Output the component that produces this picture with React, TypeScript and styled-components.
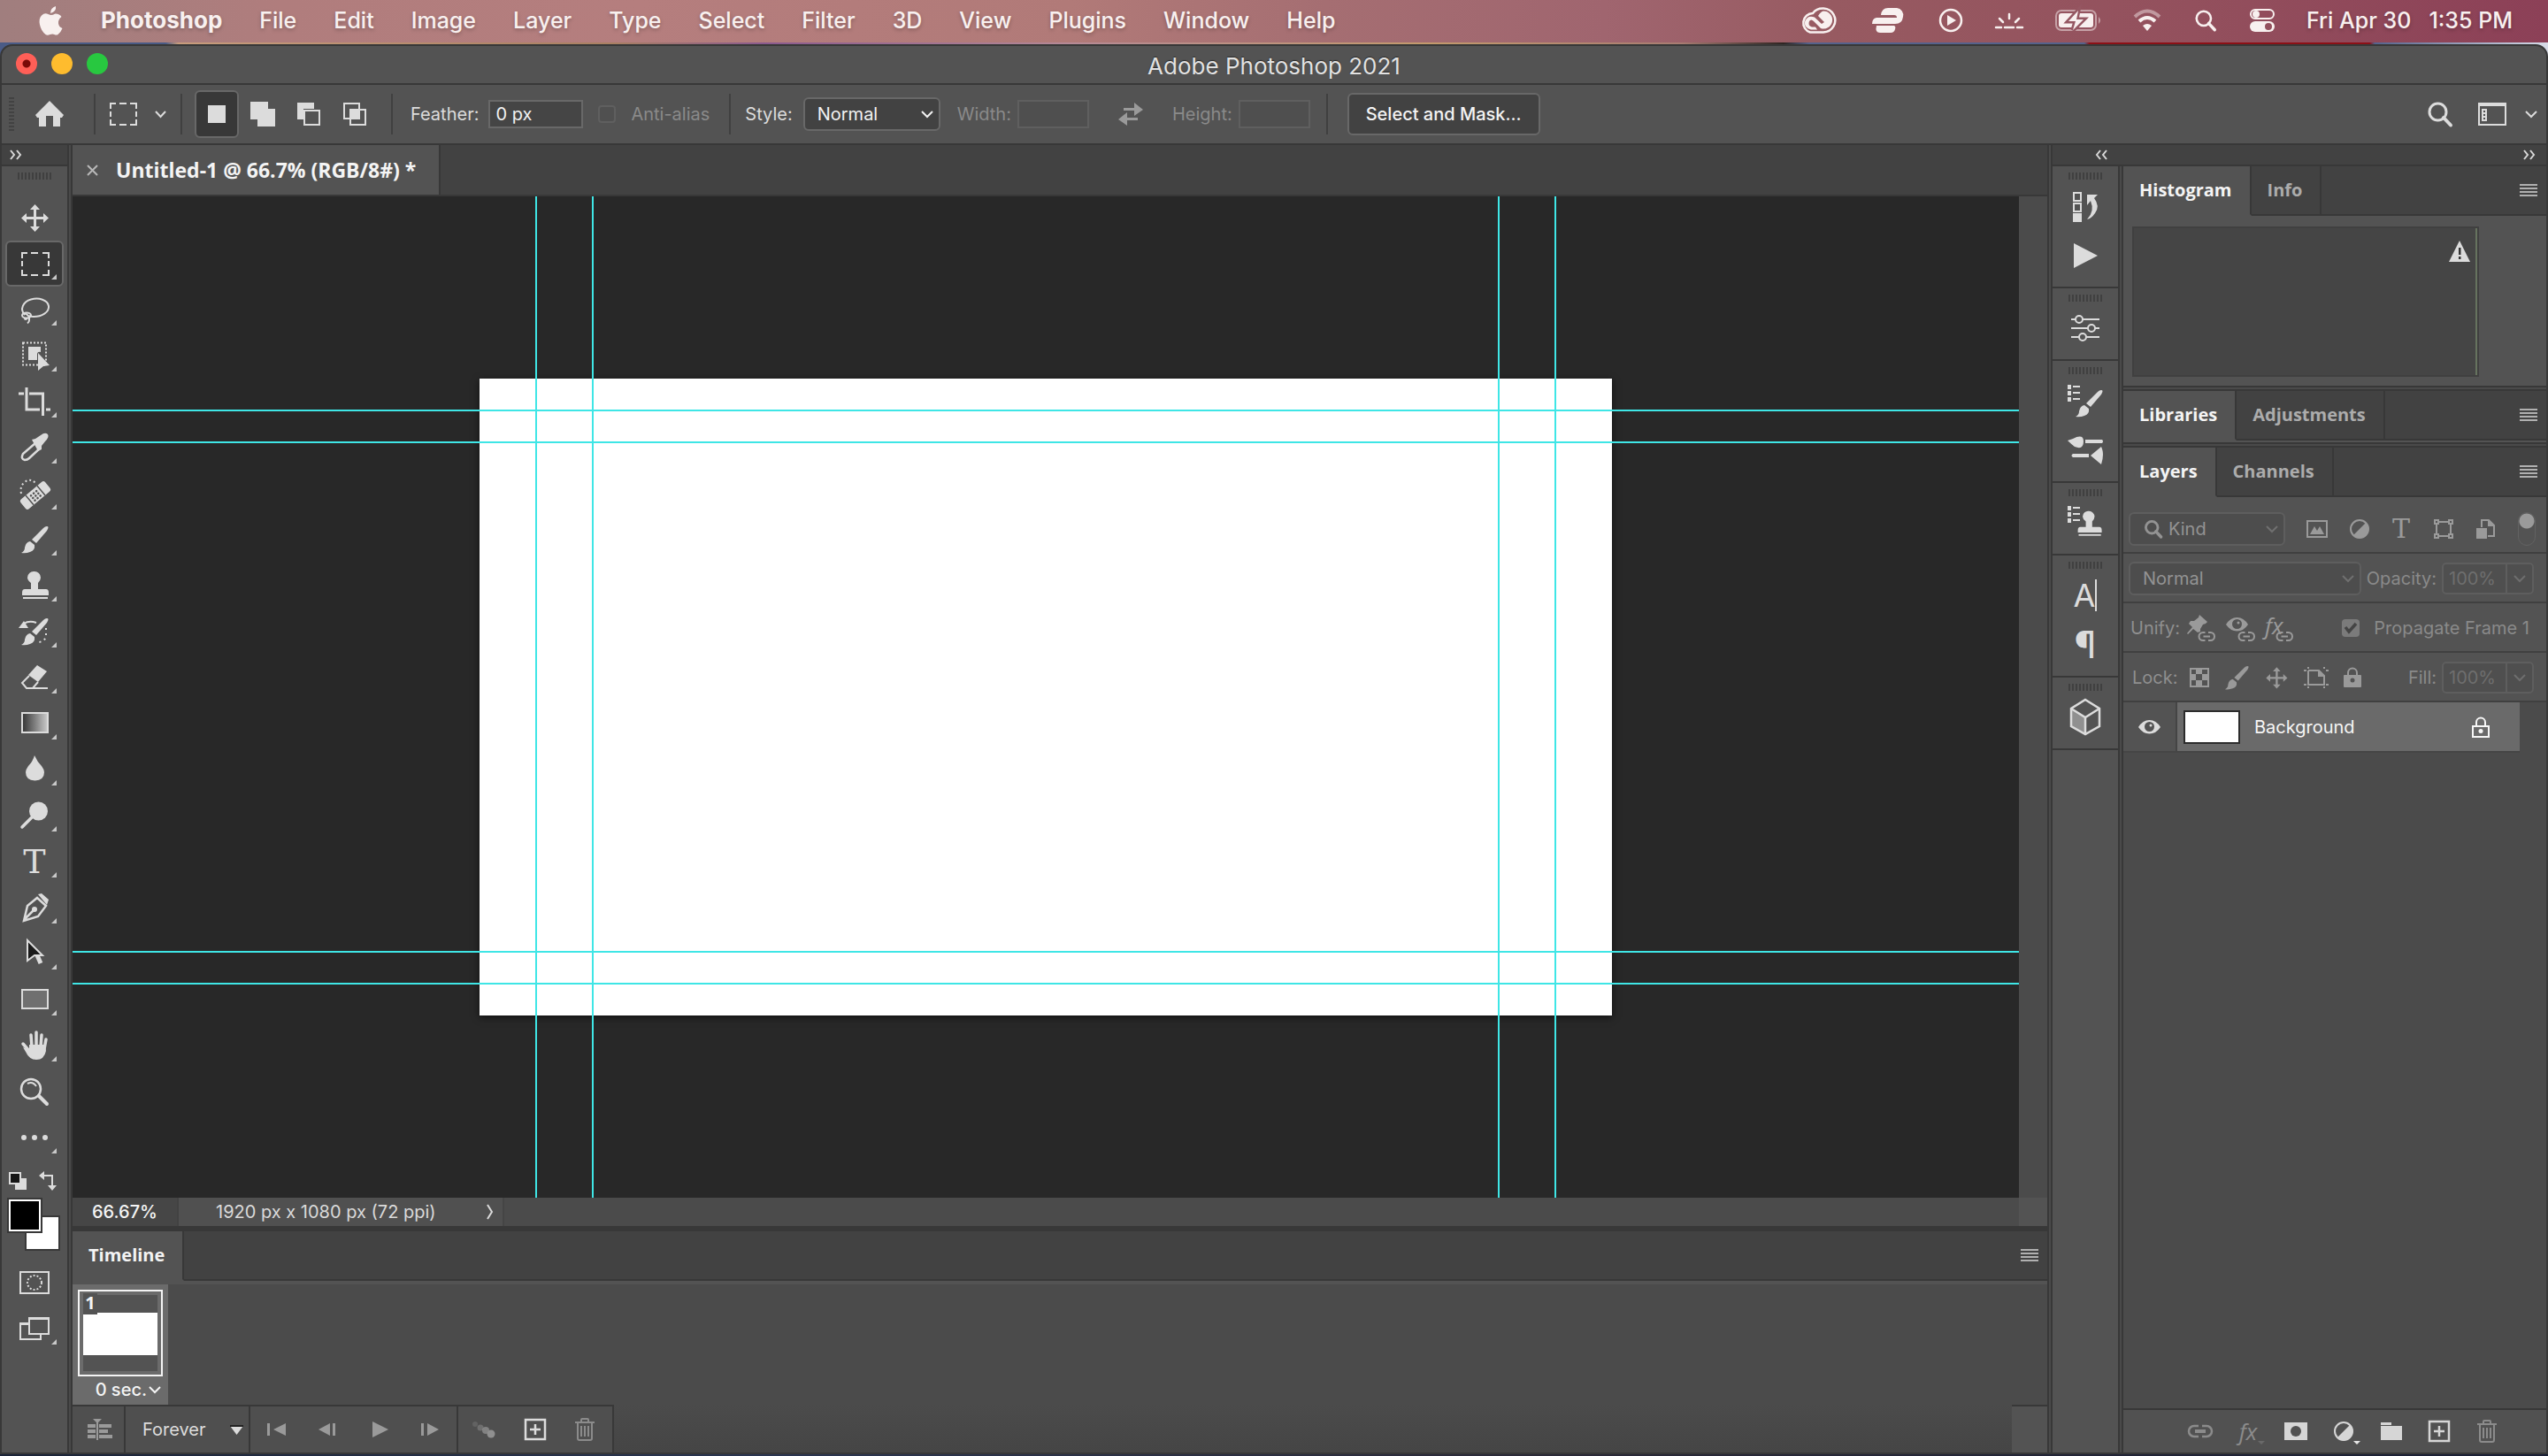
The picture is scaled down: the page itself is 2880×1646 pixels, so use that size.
import React from 'react';
import styled, { createGlobalStyle } from 'styled-components';

const c = {
  line: '#383838',
  panel: '#535353',
  bar: '#424242',
  well: '#4b4b4b',
  canvas: '#282828',
  icon: '#dcdcdc',
  dim: '#9a9a9a',
  guide: '#3fe6e6',
};
const uiFont = "Inter, 'Liberation Sans', sans-serif";
const tabFont = "'Open Sans', 'Noto Sans', sans-serif";

const Global = createGlobalStyle`
  *, *::before, *::after { box-sizing: border-box; }
  body { margin: 0; }
  button, input, select { font: inherit; color: inherit; margin: 0; padding: 0; border: 0; background: none; border-radius: 0; }
  button { display: flex; align-items: center; justify-content: center; }
  select { appearance: none; opacity: 1; }
  svg { display: block; flex: none; overflow: visible; }
`;

/* ---------- shell ---------- */

const Desktop = styled.div`
  display: flex;
  flex-direction: column;
  height: 100vh;
  padding-bottom: 2px;
  overflow: hidden;
  background: linear-gradient(90deg, #1b2438, #2a3550 30%, #2b2a38 60%, #1a2036);
  font: 400 20px/24px ${uiFont};
  color: #dcdcdc;
  white-space: nowrap;
`;

const MenuBar = styled.header`
  display: flex;
  align-items: center;
  justify-content: space-between;
  flex: none;
  height: 48px;
  padding: 0 40px 2px 44px;
  background: linear-gradient(90deg, #a07e7e 0%, #b07d7d 11%, #b57e7e 25%, #b17a78 42%, #a56e72 52%, #a0656f 63%, #975a61 72%, #93505d 86%, #8c4057 100%);
  color: #f8f0ef;
  font-size: 25px;
  line-height: 30px;
  font-weight: 500;
  text-shadow: 0 2px 4px rgba(0, 0, 0, 0.25);
`;

const Menus = styled.nav`
  display: flex;
  align-items: center;
  gap: 42px;
`;

const MenuItem = styled.button<{ $app?: boolean }>`
  font-weight: ${(p) => (p.$app ? 700 : 500)};
  font-size: ${(p) => (p.$app ? 26 : 25)}px;
  text-shadow: inherit;
`;

const StatusItems = styled.div`
  display: flex;
  align-items: center;
  gap: 36px;
`;

const StatusIcon = styled.button<{ $w: number }>`
  width: ${(p) => p.$w}px;
`;

const Clock = styled.time`
  display: flex;
  gap: 20px;
`;

const WindowFrame = styled.main`
  display: flex;
  flex-direction: column;
  flex: 1;
  min-height: 0;
  border: 2px solid ${c.line};
  border-radius: 14px 14px 0 0;
  background: ${c.panel};
  overflow: hidden;
`;

const Backdrop = styled.div`
  display: flex;
  flex: 1;
  min-height: 0;
  padding-top: 2px;
  background: linear-gradient(90deg, #4a5b86 0%, #4a5b86 6.5%, #c79c7c 7%, #a98062 24%, #8a5a8e 30%, #b58a96 42%, #c29a6c 56%, #a77c72 66%, #2e2522 70%, #55628c 71%, #55628c 81.8%, #8c1016 82%, #8c1016 93%, #55628c 93.2%, #d8dce8 100%) top / 100% 20px no-repeat;
`;

const TitleBar = styled.div`
  display: grid;
  grid-template-columns: 1fr auto 1fr;
  align-items: center;
  flex: none;
  height: 44px;
  padding: 0 16px;
  border-bottom: 2px solid ${c.line};
`;

const Lights = styled.div`
  display: flex;
  gap: 16px;
  padding-bottom: 2px;
`;

const Light = styled.button<{ $color: string; $dot?: boolean }>`
  width: 24px;
  height: 24px;
  border-radius: 50%;
  background: ${(p) => (p.$dot ? `radial-gradient(circle, #7a0a08 0 4px, ${p.$color} 5px)` : p.$color)};
`;

const Title = styled.h1`
  margin: 0;
  font-size: 26px;
  line-height: 30px;
  font-weight: 400;
  padding-top: 3px;
  color: #e2e2e2;
  text-shadow: 0 -1px 1px rgba(0, 0, 0, 0.5);
`;

/* ---------- options bar ---------- */

const OptionsBar = styled.section`
  display: flex;
  align-items: center;
  flex: none;
  height: 68px;
  border-bottom: 2px solid ${c.line};
`;

const OptionGroup = styled.div<{ $left: number; $right: number; $gap?: number; $last?: boolean }>`
  display: flex;
  align-items: center;
  height: 46px;
  gap: ${(p) => p.$gap ?? 0}px;
  padding: 0 ${(p) => p.$right}px 0 ${(p) => p.$left}px;
  border-right: ${(p) => (p.$last ? 0 : 2)}px solid #404040;
`;

const Spacer = styled.div`
  flex: 1;
`;

const GripV = styled.div`
  width: 6px;
  height: 38px;
  background: repeating-linear-gradient(${c.bar} 0 2px, transparent 2px 4px);
`;

const ModeButton = styled.button<{ $on?: boolean }>`
  width: 50px;
  height: 54px;
  border-radius: 6px;
  border: 2px solid ${(p) => (p.$on ? '#686868' : 'transparent')};
  background: ${(p) => (p.$on ? '#383838' : 'transparent')};
`;

const Label = styled.label<{ $dim?: boolean; $gap?: number }>`
  display: flex;
  align-items: center;
  gap: ${(p) => p.$gap ?? 8}px;
  color: ${(p) => (p.$dim ? '#8a8a8a' : '#dcdcdc')};
`;

const Field = styled.input<{ $w: number; $dim?: boolean }>`
  width: ${(p) => p.$w}px;
  height: 32px;
  padding: 0 6px;
  border: 2px solid ${(p) => (p.$dim ? '#5f5f5f' : '#686868')};
  background: ${(p) => (p.$dim ? '#4f4f4f' : '#454545')};
  color: #f2f2f2;
`;

const Tick = styled.input`
  appearance: none;
  width: 20px;
  height: 20px;
  border: 2px solid #5f5f5f;
  border-radius: 4px;
  background: #505050;
  &:checked {
    border: 0;
    background: #7b7b7b;
  }
`;

const TickBox = styled.span`
  display: grid;
  > * { grid-area: 1 / 1; place-self: center; pointer-events: none; }
`;

const SelectBox = styled.span<{ $w?: number; $dim?: boolean; $pad?: number }>`
  display: grid;
  align-items: center;
  width: ${(p) => (p.$w ? p.$w + 'px' : 'auto')};
  flex: ${(p) => (p.$w ? 'none' : 1)};
  height: 38px;
  border: 2px solid ${(p) => (p.$dim ? '#5e5e5e' : '#686868')};
  border-radius: 6px;
  background: ${(p) => (p.$dim ? '#4d4d4d' : '#424242')};
  color: ${(p) => (p.$dim ? '#939393' : '#f2f2f2')};
  > * { grid-area: 1 / 1; }
  > select { width: 100%; height: 34px; padding-left: ${(p) => p.$pad ?? 14}px; }
  > svg { justify-self: end; margin-right: 6px; pointer-events: none; }
  > svg:first-of-type:not(:last-child) { justify-self: start; margin-left: 16px; }
`;

const PushButton = styled.button`
  width: 218px;
  height: 48px;
  border: 2px solid #686868;
  border-radius: 6px;
  background: #424242;
  color: #f4f4f4;
  font-weight: 500;
`;

const EndTools = styled.div`
  display: flex;
  align-items: center;
  padding-right: 10px;
  gap: 29px;
  > :last-child { margin-left: -8px; }
`;

/* ---------- workspace ---------- */

const Workspace = styled.div`
  display: flex;
  flex: 1;
  min-height: 0;
`;

const Column = styled.div<{ $w?: number; $bg?: string }>`
  display: flex;
  flex-direction: column;
  flex: ${(p) => (p.$w ? 'none' : '1')};
  width: ${(p) => (p.$w ? p.$w + 'px' : 'auto')};
  min-width: 0;
  min-height: 0;
  background: ${(p) => p.$bg ?? 'transparent'};
`;

const Row = styled.div`
  display: flex;
  flex: 1;
  min-height: 0;
`;

const SplitV = styled.div`
  flex: none;
  width: 6px;
  border: solid ${c.line};
  border-width: 0 2px;
  background: #4a4a4a;
`;

const SplitH = styled.div<{ $solid?: boolean }>`
  flex: none;
  height: 6px;
  border: solid ${c.line};
  border-width: 2px 0;
  background: ${(p) => (p.$solid ? c.line : '#4a4a4a')};
`;

const DockHeader = styled.div<{ $left: number }>`
  display: flex;
  justify-content: space-between;
  align-items: center;
  flex: none;
  height: 24px;
  padding: 0 12px 0 ${(p) => p.$left}px;
  background: ${c.bar};
  border-bottom: 2px solid ${c.line};
`;

const GripH = styled.div`
  width: 39px;
  height: 8px;
  background: repeating-linear-gradient(90deg, #404040 0 2px, transparent 2px 4px);
`;

const ToolGrip = styled.div`
  display: flex;
  justify-content: center;
  height: 32px;
  padding-top: 7px;
`;

const ToolButton = styled.button<{ $on?: boolean; $more?: boolean }>`
  position: relative;
  flex: none;
  height: 52px;
  margin: 0 4px;
  border-radius: 6px;
  border: 2px solid ${(p) => (p.$on ? '#686868' : 'transparent')};
  background: ${(p) => (p.$on ? '#383838' : 'transparent')};
  &::after {
    content: '';
    display: ${(p) => (p.$more ? 'block' : 'none')};
    position: absolute;
    right: 6px;
    bottom: 6px;
    border: solid transparent;
    border-width: 3px;
    border-right-color: #c8c8c8;
    border-bottom-color: #c8c8c8;
  }
`;

const SwatchTools = styled.div`
  display: flex;
  justify-content: space-between;
  padding: 12px 12px 8px 8px;
`;

const Swatches = styled.div`
  position: relative;
  flex: none;
  height: 70px;
`;

const Swatch = styled.button<{ $front?: boolean }>`
  position: absolute;
  left: ${(p) => (p.$front ? 6 : 26)}px;
  top: ${(p) => (p.$front ? 0 : 20)}px;
  width: 40px;
  height: 40px;
  border: 2px solid ${c.line};
  background: ${(p) => (p.$front ? '#000' : '#fff')};
  box-shadow: ${(p) => (p.$front ? 'inset 0 0 0 2px #fff' : 'none')};
`;

/* ---------- tabs ---------- */

const TabStrip = styled.div`
  display: flex;
  flex: none;
  height: 56px;
  background: linear-gradient(${c.line}, ${c.line}) bottom / 100% 2px no-repeat ${c.bar};
`;

const Tab = styled.button<{ $on?: boolean }>`
  padding: 0 20px 0 18px;
  border-right: 2px solid ${c.line};
  border-bottom: 2px solid ${(p) => (p.$on ? c.panel : c.line)};
  background: ${(p) => (p.$on ? c.panel : 'transparent')};
  color: ${(p) => (p.$on ? '#f4f4f4' : '#acacac')};
  font: 700 20px/24px ${tabFont};
`;

const PanelMenu = styled.button`
  width: 20px;
  margin: 0 10px 2px auto;
`;

const DocTabs = styled.div`
  display: flex;
  flex: none;
  height: 58px;
  background: ${c.bar};
  border-bottom: 2px solid ${c.line};
`;

const DocTab = styled.div`
  display: flex;
  align-items: center;
  gap: 20px;
  padding: 0 26px 0 16px;
  border-right: 2px solid ${c.line};
  background: ${c.panel};
  color: #f4f4f4;
  font: 700 23px/28px ${tabFont};
`;

/* ---------- canvas ---------- */

const Canvas = styled.div`
  display: flex;
  align-items: center;
  justify-content: center;
  flex: 1;
  min-width: 0;
  overflow: hidden;
  background: ${c.canvas};
`;

const Artboard = styled.div`
  position: relative;
  flex: none;
  width: 1280px;
  aspect-ratio: 16 / 9;
  background: #fff;
  box-shadow: 0 2px 8px rgba(0, 0, 0, 0.6);
`;

const Guide = styled.i<{ $axis: 'x' | 'y'; $at: number }>`
  position: absolute;
  background: ${c.guide};
  ${(p) =>
    p.$axis === 'x'
      ? `left: ${p.$at}%; top: -100vh; bottom: -100vh; width: 2px; margin-left: -1px;`
      : `top: ${p.$at}%; left: -100vw; right: -100vw; height: 2px; margin-top: -1px;`}
`;

const ScrollTrack = styled.div`
  flex: none;
  width: 32px;
  background: ${c.well};
`;

const StatusBar = styled.footer`
  display: flex;
  flex: none;
  height: 32px;
  background: ${c.well};
`;

const ZoomField = styled.input`
  width: 120px;
  padding: 0 0 0 22px;
  border-right: 2px solid ${c.bar};
  background: #464646;
  color: #f4f4f4;
  font-weight: 500;
`;

const DocInfo = styled.button`
  justify-content: space-between;
  width: 368px;
  padding: 0 10px 0 42px;
  border-right: 2px solid #454545;
  background: #505050;
  color: #dadada;
`;

const Corner = styled.div<{ $w: number; $line?: boolean }>`
  width: ${(p) => p.$w}px;
  margin-left: auto;
  background: ${c.panel};
  border-top: ${(p) => (p.$line ? 2 : 0)}px solid ${c.line};
`;

/* ---------- timeline ---------- */

const Frames = styled.div`
  display: flex;
  flex: none;
  height: 140px;
  border-top: 4px solid ${c.panel};
  background: ${c.well};
`;

const Frame = styled.div`
  display: flex;
  flex-direction: column;
  align-items: center;
  width: 108px;
  padding-top: 6px;
  background: #6b6b6b;
  color: #f4f4f4;
`;

const FrameThumb = styled.button`
  position: relative;
  width: 96px;
  height: 98px;
  border: 2px solid #f4f4f4;
  background: linear-gradient(#535353 0 20px, #fff 20px 68px, #535353 68px) 4px 4px / 84px 86px no-repeat #6b6b6b;
`;

const FrameNumber = styled.span`
  position: absolute;
  left: 4px;
  top: 2px;
  width: 16px;
  height: 24px;
  background: #535353;
  font: 700 20px/22px ${tabFont};
`;

const FrameDelay = styled.button`
  gap: 2px;
  align-self: flex-end;
  margin-right: 8px;
  height: 30px;
  font-weight: 500;
`;

const TimelineBar = styled.div`
  display: flex;
  flex: none;
  height: 54px;
  background: linear-gradient(#4b4b4b, #454545);
`;

const TimelineGroup = styled.div<{ $w: number; $gap?: number; $left: number }>`
  display: flex;
  align-items: center;
  gap: ${(p) => p.$gap ?? 0}px;
  width: ${(p) => p.$w}px;
  padding-left: ${(p) => p.$left}px;
  border: solid ${c.line};
  border-width: 2px 2px 0 0;
  background: #4f4f4f;
  color: #dcdcdc;
`;

const DeleteFrame = styled.button`
  color: #8b8b8b;
`;

const Loop = styled.span`
  display: grid;
  align-items: center;
  width: 114px;
  > * { grid-area: 1 / 1; }
  > select { width: 100%; height: 40px; }
  > svg { justify-self: end; pointer-events: none; }
`;

/* ---------- right side ---------- */

const DockGroup = styled.div`
  flex: none;
  padding: 7px 0 7px;
  border-bottom: 2px solid ${c.line};
`;

const DockGrip = styled.div`
  display: flex;
  justify-content: center;
  height: 10px;
`;

const DockButton = styled.button`
  width: 100%;
  height: 56px;
`;

const Glyph = styled.span<{ $size: number; $serif?: boolean; $italic?: boolean; $bar?: boolean }>`
  min-width: 22px;
  text-align: center;
  font-family: ${(p) => (p.$serif ? "'DejaVu Serif', serif" : p.$italic ? "'Open Sans', sans-serif" : uiFont)};
  font-size: ${(p) => p.$size}px;
  font-style: ${(p) => (p.$italic ? 'italic' : 'normal')};
  font-weight: 400;
  line-height: 36px;
  border-right: ${(p) => (p.$bar ? 2 : 0)}px solid ${c.icon};
`;

const HistogramBody = styled.div`
  flex: none;
  height: 192px;
  padding: 12px 76px 10px 10px;
`;

const HistogramBox = styled.div`
  display: flex;
  justify-content: flex-end;
  height: 100%;
  padding: 14px 8px 0 0;
  border: 2px solid #404040;
  background: #454545;
  box-shadow: inset -2px 0 #66735f;
`;

const PropRow = styled.div<{ $left?: number; $right?: number; $gap?: number }>`
  display: flex;
  align-items: center;
  flex: none;
  height: 56px;
  gap: ${(p) => p.$gap ?? 0}px;
  padding: 2px ${(p) => p.$right ?? 14}px 0 ${(p) => p.$left ?? 6}px;
  border-bottom: 2px solid #404040;
  color: #8f8f8f;
`;

const FilterRow = styled(PropRow)`
  height: 64px;
  padding-top: 10px;
`;

const IconStrip = styled.div<{ $gap: number; $left: number }>`
  display: flex;
  align-items: center;
  gap: ${(p) => p.$gap}px;
  margin-left: ${(p) => p.$left}px;
  color: ${c.dim};
`;

const Toggle = styled.input`
  appearance: none;
  width: 20px;
  height: 38px;
  margin-left: auto;
  border: 1px solid #626262;
  border-radius: 10px;
  background: radial-gradient(circle at 50% 9px, ${c.dim} 8px, transparent 9px);
`;

const Percent = styled.span`
  display: flex;
  align-items: center;
  width: 104px;
  height: 36px;
  border: 2px solid #5e5e5e;
  border-radius: 5px;
  background: #4f4f4f;
  color: #6e6e6e;
  > input { width: 70px; height: 32px; padding-left: 6px; }
  > button { flex: 1; height: 32px; border-left: 2px solid #5e5e5e; }
`;

const LayerRow = styled.div`
  display: flex;
  flex: none;
  height: 57px;
  margin-right: 30px;
  border-bottom: 2px solid #454545;
  background: ${c.panel};
`;

const Visibility = styled.button`
  width: 61px;
  border-right: 2px solid #454545;
`;

const LayerBody = styled.div`
  display: flex;
  align-items: center;
  flex: 1;
  gap: 16px;
  padding: 0 34px 0 7px;
  background: #6a6a6a;
  color: #f6f6f6;
  > svg { margin-left: auto; }
`;

const LayerThumb = styled.span`
  width: 64px;
  height: 38px;
  border: 2px solid #2c2c2c;
  background: #fff;
`;

const LayerFooter = styled.footer`
  display: flex;
  align-items: center;
  justify-content: flex-end;
  flex: none;
  height: 50px;
  padding-right: 40px;
  margin-top: auto;
  border-top: 2px solid ${c.line};
  background: #515151;
`;

const FootButton = styled.button<{ $dim?: boolean; $caret?: boolean }>`
  position: relative;
  width: 54px;
  height: 48px;
  color: ${(p) => (p.$dim ? '#8b8b8b' : '#d6d6d6')};
  &::after {
    content: '';
    display: ${(p) => (p.$caret ? 'block' : 'none')};
    position: absolute;
    right: 8px;
    bottom: 9px;
    border: 4px solid transparent;
    border-bottom: 0;
    border-top-color: ${(p) => (p.$dim ? '#696969' : '#e6e6e6')};
  }
`;

/* ---------- icons ---------- */

type IconProps = { w: number; h?: number; children: React.ReactNode; color?: string };
const Icon = ({ w, h = w, children, color = 'currentColor' }: IconProps) => (
  <svg width={w} height={h} viewBox={`0 0 ${w} ${h}`} fill={color} stroke="none" aria-hidden="true">
    {children}
  </svg>
);
const line = { fill: 'none', stroke: 'currentColor', strokeWidth: 2 } as const;

const Chevron = ({ w = 14, color }: { w?: number; color?: string }) => (
  <Icon w={w} h={8}>
    <path d={`M1 1L${w / 2} 7L${w - 1} 1`} {...line} stroke={color ?? 'currentColor'} />
  </Icon>
);
const Double = ({ left }: { left?: boolean }) => (
  <Icon w={14} h={10}>
    <path d={left ? 'M6 0L2 5L6 10M13 0L9 5L13 10' : 'M1 0L5 5L1 10M8 0L12 5L8 10'} {...line} stroke="#d8d8d8" />
  </Icon>
);
const Burger = () => (
  <Icon w={20} h={14} color="#b0b0b0">
    <path d="M0 0h20v2H0zM0 4h20v2H0zM0 8h20v2H0zM0 12h20v2H0z" />
  </Icon>
);
const Magnifier = ({ w = 28, sw = 3 }: { w?: number; sw?: number }) => (
  <svg width={w} height={w} viewBox="0 0 28 28" fill="none" stroke="currentColor" strokeWidth={sw} aria-hidden="true">
    <circle cx="11.500" cy="11.500" r="9.500" />
    <path d="M18 18L26 26.500" strokeWidth={sw + 1} strokeLinecap="round" />
  </svg>
);
const Brush = () => (
  <>
    <path d="M32 3q3 0 0 5L20 22l-5-4L28 5q2-2 4-2z" />
    <path d="M13 20l5 4q1 6-5 8-5 2-10 1 4-2 4-6 1-6 6-7z" />
  </>
);
const Stamp = () => (
  <>
    <path d="M18 2a7 7 0 0 1 7 7q0 3-3 6v7h9q3 0 3 4v3H4v-3q0-4 3-4h7v-7q-4-3-4-6a7 7 0 0 1 8-7z" />
    <path d="M5 31h28v2H5z" />
  </>
);
const ListMark = () => <path d="M0 0h4v5H0zM6 1h8v2H6zM0 7h4v5H0zM6 8h8v2H6zM0 14h4v5H0zM6 15h8v2H6z" />;
const MoveShape = ({ s = 36 }: { s?: number }) => (
  <svg width={s} height={s} viewBox="0 0 36 36" fill="currentColor" aria-hidden="true">
    <path d="M17 8h3v9h9v3h-9v9h-3v-9H8v-3h9z" />
    <path d="M18.500 3l5.500 6H13zM18.500 34l5.500-6H13zM3 18.500l6-5.500v11zM34 18.500l-6-5.500v11z" />
  </svg>
);
const LinkShape = () => <path d="M7.500 1H5a4.500 4.500 0 0 0 0 9h2.500M11 1h2.500a4.500 4.500 0 0 1 0 9H11M5.500 5.500H13" fill="none" stroke="currentColor" strokeWidth="2" />;
const EyeShape = ({ bg = c.panel }: { bg?: string }) => (
  <>
    <path d="M0 8q5-8 12.500-8T25 8q-5 7.500-12.500 7.500T0 8z" />
    <circle cx="12.500" cy="7.500" r="5.500" fill={bg} />
    <circle cx="14" cy="6" r="1.500" />
  </>
);
const Trash = () => (
  <Icon w={22} h={26}>
    <path d="M7 4V2q0-1 1-1h6q1 0 1 1v2M0 5h22M3 6v17q0 2 2 2h12q2 0 2-2V6M7 9v12M11 9v12M15 9v12" {...line} />
  </Icon>
);
const NewItem = () => (
  <Icon w={24} h={24}>
    <path d="M1 1h22v22H1zM12 6v12M6 12h12" {...line} strokeWidth={2.500} />
  </Icon>
);
const HalfCircle = () => (
  <Icon w={22}>
    <circle cx="11" cy="11" r="10" {...line} />
    <path d="M18.500 3.500a10 10 0 0 1-15 15z" />
  </Icon>
);
const Padlock = ({ solid }: { solid?: boolean }) => (
  <Icon w={20} h={24}>
    <path d="M5 10V6.500a5 5 0 0 1 10 0V10" {...line} />
    {solid ? <path d="M1 9h18q1 0 1 1v12q0 1-1 1H1q-1 0-1-1V10q0-1 1-1z" /> : <path d="M1 11h18v12H1z" {...line} />}
    <circle cx="10" cy={solid ? 15 : 16.500} r="2.500" fill={solid ? c.panel : 'currentColor'} />
  </Icon>
);

type Tool = { name: string; more?: boolean; on?: boolean; art: React.ReactNode };
const tools: Tool[] = [
  { name: 'Move', art: <MoveShape /> },
  {
    name: 'Rectangular Marquee', more: true, on: true,
    art: <Icon w={36}><path d="M4 12V6h6M14 6h8M27 6h7v6M34 15v6M34 25v6h-7M22 31h-8M10 31H4v-6M4 21v-6" {...line} /></Icon>,
  },
  {
    name: 'Lasso', more: true,
    art: <Icon w={36}><g {...line}><path d="M7 24C1 18 5 9 14 6.500S33 7 34 14 26 26 17 26q-3 0-5-1" /><ellipse cx="9" cy="24.500" rx="5" ry="3" /><path d="M6 22q7 2 6 8 0 2-2 3.500M10 28q-3 2-3 0" /></g></Icon>,
  },
  {
    name: 'Object Selection', more: true,
    art: <Icon w={36}><path d="M5 3.500h26v25H5z" {...line} strokeDasharray="2 2" /><path d="M11 8h14v6q-4-1-4 3v6H11z" /><path d="M22 15l13 14-7 1-6 5z" /></Icon>,
  },
  {
    name: 'Crop', more: true,
    art: <Icon w={36}><g {...line} strokeWidth={3}><path d="M0 9h6M12 9h15.500v25M9 2v25h15M31 27h5" /></g></Icon>,
  },
  {
    name: 'Eyedropper', more: true,
    art: <Icon w={36}><path d="M19 13L5 25q-3 6 2 7 3 0 5-2L25 18" {...line} strokeWidth={2.500} /><path d="M15 9l4-1 6-4q5-4 8-1 2 3-3 8l-4 5v4l-4 2z" /></Icon>,
  },
  {
    name: 'Spot Healing Brush', more: true,
    art: <Icon w={36}><path d="M3 18q-2-8 4-13t12 1" {...line} strokeDasharray="2 3" /><g transform="rotate(-40 19 20)"><rect x="1" y="13" width="36" height="14" rx="3" /><path d="M10.500 13v14M27.500 13v14" stroke={c.panel} strokeWidth="1.500" /><g fill={c.panel}><circle cx="15" cy="17" r="1.300" /><circle cx="19" cy="17" r="1.300" /><circle cx="23" cy="17" r="1.300" /><circle cx="15" cy="20.500" r="1.300" /><circle cx="19" cy="20.500" r="1.300" /><circle cx="23" cy="20.500" r="1.300" /><circle cx="15" cy="24" r="1.300" /><circle cx="19" cy="24" r="1.300" /><circle cx="23" cy="24" r="1.300" /></g></g></Icon>,
  },
  { name: 'Brush', more: true, art: <Icon w={36}><Brush /></Icon> },
  { name: 'Clone Stamp', more: true, art: <Icon w={36}><Stamp /></Icon> },
  {
    name: 'History Brush', more: true,
    art: <Icon w={36}><Brush /><path d="M0 14L6 6l5 8z" /><path d="M6 9q6-4 14-1" {...line} /><path d="M31 14v10q-2 5-8 6" {...line} strokeDasharray="2 4" /></Icon>,
  },
  {
    name: 'Eraser', more: true,
    art: <Icon w={36}><path d="M21 4l11 7-10 12-11-8z" /><path d="M12 16L4 24l5 6h7l6-7M9 30h24" {...line} /></Icon>,
  },
  {
    name: 'Gradient', more: true,
    art: <Icon w={36}><defs><linearGradient id="ramp"><stop offset="0" stopColor="#333" /><stop offset="1" stopColor="#ccc" /></linearGradient></defs><path d="M4 6h29v22H4z" fill="url(#ramp)" stroke={c.icon} strokeWidth="2" /></Icon>,
  },
  { name: 'Blur', more: true, art: <Icon w={36}><path d="M18 2q3 7 8 12 3 4 3 7 0 9-10.500 9.500Q8 30 8 21q0-3 3-7 5-5 7-12z" /></Icon> },
  { name: 'Dodge', more: true, art: <Icon w={36}><circle cx="22.500" cy="13" r="10.500" /><path d="M15 20L4 31" {...line} strokeWidth={3.500} strokeLinecap="round" /></Icon> },
  { name: 'Type', more: true, art: <Glyph $size={38} $serif>T</Glyph> },
  {
    name: 'Pen', more: true,
    art: <Icon w={36}><path d="M6 33l4-17 11-9 10 9-9 12zM6 32l11-11" {...line} strokeWidth={2.500} /><circle cx="18" cy="20" r="3" /><path d="M22 3l4-1 8 7-2 6z" /></Icon>,
  },
  {
    name: 'Path Selection', more: true,
    art: <Icon w={36}><path d="M21 20l4 9" {...line} strokeWidth={5} /><path d="M10 3l17 17h-9l-8 6z" fill="#1a1a1a" stroke={c.icon} strokeWidth="2" /></Icon>,
  },
  { name: 'Rectangle', more: true, art: <Icon w={36}><path d="M4 7h29v21H4z" fill="#707070" stroke={c.icon} strokeWidth="2" /></Icon> },
  {
    name: 'Hand', more: true,
    art: <Icon w={36}><g {...line} strokeWidth={3.500} strokeLinecap="round"><path d="M15 20L14 6M20 19V3M25 20l1-14M29 22l2-11M12 24l-7-8" /></g><path d="M12 17h18l1 7q-2 10-11 10-8 0-12-9l-3-5 7 3z" /></Icon>,
  },
  {
    name: 'Zoom',
    art: <Icon w={36}><g {...line} strokeWidth={2.500}><circle cx="14" cy="15" r="11" /><path d="M10 9q6-3 10 3" strokeWidth="2" /></g><path d="M23 23l9 9" {...line} strokeWidth={4} strokeLinecap="round" /></Icon>,
  },
  { name: 'Edit Toolbar', more: true, art: <Icon w={36}><circle cx="6" cy="18" r="3" /><circle cx="18" cy="18" r="3" /><circle cx="30" cy="18" r="3" /></Icon> },
];

const dock: { name: string; art: React.ReactNode }[][] = [
  [
    { name: 'History', art: <Icon w={30} h={36}><path d="M2 3h8v9H2zM2 15h8v9H2z" {...line} /><path d="M1 26h10v10H1z" /><path d="M17 5h12l-4 4q7 9 1 17-4 6-9 7 9-9 4-21l-4 5z" /></Icon> },
    { name: 'Actions', art: <Icon w={28}><path d="M1 0l27 14L1 28z" /></Icon> },
  ],
  [{ name: 'Properties', art: <Icon w={32} h={32}><g {...line}><path d="M0 6h5M13 6h19M0 16h19M27 16h5M0 26h9M17 26h15" /><circle cx="9" cy="6" r="4" /><circle cx="23" cy="16" r="4" /><circle cx="13" cy="26" r="4" /></g></Icon> }],
  [
    { name: 'Brush Settings', art: <Icon w={40} h={36}><ListMark /><g transform="translate(6 3)"><Brush /></g></Icon> },
    { name: 'Brushes', art: <Icon w={40} h={36}><path d="M0 7l6-2q12-6 12 3 0 10-10 6-4-3-8-7z" /><path d="M20 6h19q2 2 0 4H20zM6 22h18v4H6q-3-2 0-4z" /><path d="M26 24l12-10q4 8 0 20z" /></Icon> },
  ],
  [{ name: 'Clone Source', art: <Icon w={40} h={38}><ListMark /><g transform="translate(8 4) scale(.9)"><Stamp /></g></Icon> }],
  [
    { name: 'Character', art: <Glyph $size={36} $bar>A</Glyph> },
    { name: 'Paragraph', art: <Glyph $size={42}>¶</Glyph> },
  ],
  [{ name: '3D', art: <Icon w={34} h={42}><path d="M1 11l16 10v19L1 31z" fill="#909090" /><path d="M17 1l16 10v20l-16 9-16-9V11zM1 11l16 10 16-10M17 20v20" {...line} strokeWidth={2.500} /></Icon> }],
];

const menus = ['File', 'Edit', 'Image', 'Layer', 'Type', 'Select', 'Filter', '3D', 'View', 'Plugins', 'Window', 'Help'];

/* ---------- composed parts ---------- */

const TabBar = ({ tabs }: { tabs: string[] }) => (
  <TabStrip role="tablist">
    {tabs.map((t, i) => (
      <Tab key={t} role="tab" aria-selected={i === 0} $on={i === 0}>{t}</Tab>
    ))}
    <PanelMenu aria-label={`${tabs[0]} panel menu`}><Burger /></PanelMenu>
  </TabStrip>
);

const PercentField = ({ id }: { id: string }) => (
  <Percent>
    <input id={id} defaultValue="100%" readOnly />
    <button aria-label="Open slider"><Chevron /></button>
  </Percent>
);

const SystemBar = () => (
  <MenuBar>
    <Menus>
      <MenuItem aria-label="Apple">
        <Icon w={28} h={32}>
          <path d="M19 0q1 6-6 8 0-6 6-8zM13.500 10q2 0 5-1.500 5 0 7 3.500-4 3-3.500 7.500.5 4 4.500 5.500-2 5-5 7-2 1-4 0t-5 0q-3 1.500-5 0-5-4-6.500-11t2-10.500q3-3 6-2t4.500 1.500z" />
        </Icon>
      </MenuItem>
      <MenuItem $app>Photoshop</MenuItem>
      {menus.map((m) => <MenuItem key={m}>{m}</MenuItem>)}
    </Menus>
    <StatusItems>
      <StatusIcon $w={42} aria-label="Creative Cloud">
        <Icon w={40} h={30}>
          <path d="M10 28.500h15A14 13.500 0 1 0 13 7 11 11 0 0 0 10 28.500z" {...line} strokeWidth={2.500} />
          <path d="M25 4.500a10 10 0 1 1-3 19.500L14 16q-3-3-5 0-2 5 3 6.500h4l2 3h-7q-8-2-7-9 3-8 11-5l8 7.500 3-2-7-7q3-5 6-5.500z" />
        </Icon>
      </StatusIcon>
      <StatusIcon $w={42} aria-label="Menu extra">
        <Icon w={36} h={28}>
          <path d="M18 0h10a8 8 0 0 1 7 10q-1 8-9 8H0q0-6 5-7h23q0-3-3-3H10q1-8 8-8z" />
          <path d="M5 20h20q2 1 1 4-1 4-5 4H9q-6 0-4-8z" />
        </Icon>
      </StatusIcon>
      <StatusIcon $w={28} aria-label="Now Playing">
        <Icon w={28}><circle cx="14" cy="14" r="12" {...line} strokeWidth={2.500} /><path d="M10 8l10 6-10 6z" /></Icon>
      </StatusIcon>
      <StatusIcon $w={32} aria-label="Keyboard Brightness">
        <Icon w={32} h={18}><path d="M1 17h6M11 17h10M25 17h6M16 2v5M5 7l4 4M27 7l-4 4" {...line} strokeWidth={2.500} strokeLinecap="round" /></Icon>
      </StatusIcon>
      <StatusIcon $w={52} aria-label="Battery">
        <Icon w={52} h={24}>
          <rect x="1" y="1" width="45" height="22" rx="6" {...line} strokeOpacity=".5" />
          <path d="M49 8q4 4 0 8z" fillOpacity=".5" />
          <rect x="4" y="4" width="39" height="16" rx="3" />
          <path d="M26 1L15 13h8l-3 10L32 11h-8z" stroke="#955762" strokeWidth="5" />
          <path d="M26 1L15 13h8l-3 10L32 11h-8z" />
        </Icon>
      </StatusIcon>
      <StatusIcon $w={32} aria-label="Wi-Fi">
        <Icon w={32} h={24}>
          <path d="M2 8q14-13 28 0" {...line} strokeWidth={4} strokeOpacity=".45" />
          <path d="M7 13q9-8 18 0" {...line} strokeWidth={4} />
          <path d="M11 18q5-4 10 0l-5 6z" />
        </Icon>
      </StatusIcon>
      <StatusIcon $w={28} aria-label="Spotlight"><Magnifier w={24} /></StatusIcon>
      <StatusIcon $w={28} aria-label="Control Center">
        <Icon w={28} h={26}>
          <rect x="1" y="1" width="26" height="10" rx="5" {...line} /><circle cx="7" cy="6" r="4" />
          <rect y="14" width="28" height="12" rx="6" /><circle cx="21" cy="20" r="4" fill="#93505d" />
        </Icon>
      </StatusIcon>
      <Clock><span>Fri Apr 30</span><span>1:35 PM</span></Clock>
    </StatusItems>
  </MenuBar>
);

const Options = () => (
  <OptionsBar aria-label="Tool options">
    <OptionGroup $left={8} $right={34} $gap={24}>
      <GripV />
      <button aria-label="Home">
        <Icon w={32} h={30}><path d="M16 0l16 16-2 3h-2v10h-8V17h-8v12H4V19H2l-2-3z" /></Icon>
      </button>
    </OptionGroup>
    <OptionGroup $left={16} $right={16} $gap={20}>
      <Icon w={31} h={26}><path d="M1 7V1h6M11 1h8M23 1h7v6M30 10v6M30 19v6h-7M19 25h-8M7 25H1v-6M1 16v-6" {...line} /></Icon>
      <button aria-label="Tool presets"><Chevron w={13} /></button>
    </OptionGroup>
    <OptionGroup $left={14} $right={16} $gap={2}>
      <ModeButton $on aria-label="New selection"><Icon w={20}><path d="M0 0h20v20H0z" /></Icon></ModeButton>
      <ModeButton aria-label="Add to selection"><Icon w={28}><path d="M0 0h20v8h8v20H8V20H0z" /></Icon></ModeButton>
      <ModeButton aria-label="Subtract from selection"><Icon w={26}><path d="M0 0h19v7H7v12H0z" /><path d="M8 9h17v16H8z" {...line} /></Icon></ModeButton>
      <ModeButton aria-label="Intersect with selection"><Icon w={26}><path d="M1 1h17v17H1zM8 8h17v17H8z" {...line} /><path d="M8 8h11v11H8z" /></Icon></ModeButton>
    </OptionGroup>
    <OptionGroup $left={20} $right={22} $gap={17}>
      <Label $gap={11}>Feather:<Field $w={107} defaultValue="0 px" /></Label>
      <Label $dim $gap={17}><Tick type="checkbox" disabled />Anti-alias</Label>
    </OptionGroup>
    <OptionGroup $left={16} $right={18} $gap={19}>
      <Label $gap={12}>Style:
        <SelectBox $w={155}><select defaultValue="Normal"><option>Normal</option></select><Chevron /></SelectBox>
      </Label>
      <Label $dim $gap={7}>Width:<Field $w={81} $dim disabled /></Label>
      <OptionGroup $left={14} $right={14} $last>
        <button aria-label="Swap width and height">
          <Icon w={28} h={26} color="#9a9a9a"><path d="M6 6h12V0l10 8-10 7V9H6zM22 17v3H10v6L0 19l10-8v6z" /></Icon>
        </button>
      </OptionGroup>
      <Label $dim $gap={7}>Height:<Field $w={81} $dim disabled /></Label>
    </OptionGroup>
    <OptionGroup $left={22} $right={0} $last><PushButton>Select and Mask...</PushButton></OptionGroup>
    <Spacer />
    <EndTools>
      <button aria-label="Search"><Magnifier /></button>
      <button aria-label="Workspace">
        <Icon w={32} h={26}><path d="M1 1h30v24H1z" {...line} /><path d="M1 1h30v3H1zM4 7h6v14H4z" /><path d="M6 9h2v2H6zM6 13h2v2H6zM6 17h2v2H6z" fill={c.panel} /></Icon>
      </button>
      <button aria-label="Choose workspace"><Chevron /></button>
    </EndTools>
  </OptionsBar>
);

const Toolbar = () => (
  <Column $w={74} as="aside">
    <DockHeader $left={9}><Double /></DockHeader>
    <ToolGrip><GripH /></ToolGrip>
    {tools.map((t) => (
      <ToolButton key={t.name} aria-label={t.name} $on={t.on} $more={t.more}>{t.art}</ToolButton>
    ))}
    <SwatchTools>
      <button aria-label="Default colors"><Icon w={20} h={22}><path d="M7 8h13v13H7z" /><path d="M1 2h12v12H1z" fill="#161616" stroke={c.icon} strokeWidth="2" /></Icon></button>
      <button aria-label="Swap colors"><Icon w={20} h={22}><path d="M5 5h10v11" {...line} /><path d="M0 5l6-5v10zM15 22l-5-6h10z" /></Icon></button>
    </SwatchTools>
    <Swatches>
      <Swatch aria-label="Background color" />
      <Swatch $front aria-label="Foreground color" />
    </Swatches>
    <ToolButton aria-label="Quick Mask"><Icon w={34} h={26}><path d="M1 1h32v24H1z" {...line} /><circle cx="17" cy="13" r="8" {...line} strokeDasharray="2 2" /></Icon></ToolButton>
    <ToolButton aria-label="Screen Mode" $more><Icon w={34} h={26}><path d="M10 7H1v18h23v-6M11 1h22v18H11z" {...line} /><path d="M0 6h10v3H0zM10 0h24v3H10z" /></Icon></ToolButton>
  </Column>
);

const DocumentArea = () => (
  <Column>
    <DocTabs>
      <DocTab>
        <button aria-label="Close document"><Icon w={13}><path d="M1 1l11 11M12 1L1 12" {...line} stroke="#b8b8b8" /></Icon></button>
        Untitled-1 @ 66.7% (RGB/8#) *
      </DocTab>
    </DocTabs>
    <Row>
      <Canvas>
        <Artboard>
          {[5, 10, 90, 95].map((n) => <Guide key={'x' + n} $axis="x" $at={n} />)}
          {[5, 10, 90, 95].map((n) => <Guide key={'y' + n} $axis="y" $at={n} />)}
        </Artboard>
      </Canvas>
      <ScrollTrack />
    </Row>
    <StatusBar>
      <ZoomField aria-label="Zoom level" defaultValue="66.67%" />
      <DocInfo>
        1920 px x 1080 px (72 ppi)
        <Icon w={8} h={18}><path d="M1 1l5 8-5 8" {...line} /></Icon>
      </DocInfo>
      <Corner $w={32} />
    </StatusBar>
    <SplitH $solid />
    <TabBar tabs={['Timeline']} />
    <Frames>
      <Frame>
        <FrameThumb aria-label="Frame 1"><FrameNumber>1</FrameNumber></FrameThumb>
        <FrameDelay>0 sec.<Chevron /></FrameDelay>
      </Frame>
    </Frames>
    <TimelineBar>
      <TimelineGroup $w={60} $left={17}>
        <button aria-label="Convert to video timeline">
          <Icon w={28} h={24} color="#9a9a9a"><path d="M0 6h9v4H0zM13 6h14v4H13zM0 12h9v4H0zM13 12h10v4H13zM0 18h9v4H0zM13 18h15v4H13zM10 2h2v22h-2zM6 0h10l-5 5z" /></Icon>
        </button>
      </TimelineGroup>
      <TimelineGroup $w={141} $left={19}>
        <Loop>
          <select aria-label="Looping options" defaultValue="Forever"><option>Forever</option></select>
          <Icon w={15} h={11}><path d="M0 1h15L7.500 11z" /><path d="M0 0h15v2H0z" fill="#222" /></Icon>
        </Loop>
      </TimelineGroup>
      <TimelineGroup $w={235} $left={18} $gap={36}>
        <button aria-label="First frame"><Icon w={22} h={14} color="#9a9a9a"><path d="M1 0h3v14H1zM22 0v14L8 7z" /></Icon></button>
        <button aria-label="Previous frame"><Icon w={22} h={14} color="#9a9a9a"><path d="M14 0v14L1 7zM17 0h3v14h-3z" /></Icon></button>
        <button aria-label="Play"><Icon w={22} h={18} color="#9a9a9a"><path d="M4 0l18 9L4 18z" /></Icon></button>
        <button aria-label="Next frame"><Icon w={22} h={14} color="#9a9a9a"><path d="M1 0h3v14H1zM8 0v14l13-7z" /></Icon></button>
      </TimelineGroup>
      <TimelineGroup $w={176} $left={16} $gap={33}>
        <button aria-label="Tween frames">
          <Icon w={26} h={20} color="#8f8f8f"><circle cx="3" cy="4" r="3" fillOpacity=".3" /><circle cx="9" cy="8" r="3.500" fillOpacity=".5" /><circle cx="15" cy="11" r="4" fillOpacity=".8" /><circle cx="21" cy="15" r="4.500" /></Icon>
        </button>
        <button aria-label="Duplicate frame"><NewItem /></button>
        <DeleteFrame aria-label="Delete frame"><Trash /></DeleteFrame>
      </TimelineGroup>
      <Corner $w={40} $line />
    </TimelineBar>
  </Column>
);

const SideDock = () => (
  <Column $w={74}>
    {dock.map((g) => (
      <DockGroup key={g[0].name}>
        <DockGrip><GripH /></DockGrip>
        {g.map((d) => <DockButton key={d.name} aria-label={d.name}>{d.art}</DockButton>)}
      </DockGroup>
    ))}
  </Column>
);

const LayerControls = () => (
  <Column as="section" $bg={c.panel}>
    <FilterRow $right={12}>
      <SelectBox $w={177} $dim $pad={43}>
        <Magnifier w={20} sw={4} />
        <select aria-label="Filter type" defaultValue="Kind" disabled><option>Kind</option></select>
        <Chevron color="#707070" />
      </SelectBox>
      <IconStrip $gap={25} $left={24}>
        <Icon w={24} h={20}><path d="M1 1h22v18H1z" {...line} /><path d="M4 16l5-9 3 5 3-5 5 9z" /></Icon>
        <HalfCircle />
        <Glyph $size={30} $serif>T</Glyph>
        <Icon w={24}><path d="M4 4h16v16H4z" {...line} /><path d="M2 2h4v4H2zM18 2h4v4h-4zM2 18h4v4H2zM18 18h4v4h-4z" fill={c.panel} stroke="currentColor" strokeWidth="2" /></Icon>
        <Icon w={22} h={24}><path d="M6 10V2h8l6 6v12h-7" {...line} /><path d="M13 1v8h8zM0 11h12v12H0z" /></Icon>
      </IconStrip>
      <Toggle type="checkbox" aria-label="Layer filtering" disabled />
    </FilterRow>
    <PropRow $gap={6}>
      <SelectBox $dim>
        <select aria-label="Blend mode" defaultValue="Normal" disabled><option>Normal</option></select>
        <Chevron color="#707070" />
      </SelectBox>
      <Label $dim htmlFor="opacity">Opacity:</Label>
      <PercentField id="opacity" />
    </PropRow>
    <PropRow $left={8} $right={19}>
      Unify:
      <IconStrip $gap={12} $left={8}>
        <Icon w={32} h={30}><path d="M14 0l9 8-2 2-3 1-3 5v3l-3 1-5-4-6 6-1-1 6-7-4-4 2-3h4l5-4z" /><g transform="translate(13 19)"><LinkShape /></g></Icon>
        <Icon w={32} h={30}><g transform="translate(0 3)"><EyeShape /></g><g transform="translate(14 19)"><LinkShape /></g></Icon>
        <Icon w={32} h={30}><text x="0" y="22" fontSize="26" fontStyle="italic" fontFamily="Open Sans">fx</text><g transform="translate(13 19)"><LinkShape /></g></Icon>
      </IconStrip>
      <Spacer />
      <Label $dim $gap={16}>
        <TickBox>
          <Tick type="checkbox" defaultChecked disabled />
          <Icon w={14} h={12}><path d="M1 5l4 5 8-9" {...line} stroke="#454545" strokeWidth={3.500} /></Icon>
        </TickBox>
        Propagate Frame 1
      </Label>
    </PropRow>
    <PropRow $left={10} $gap={6}>
      Lock:
      <IconStrip $gap={17} $left={8}>
        <Icon w={22}><path d="M1 1h20v20H1z" {...line} /><path d="M7 1h7v6H7zM1 7h6v7H1zM14 7h7v7h-7zM7 14h7v7H7z" /></Icon>
        <svg width="28" height="28" viewBox="2 2 32 32" fill="currentColor" aria-hidden="true"><Brush /></svg>
        <MoveShape s={28} />
        <Icon w={28} h={24}><path d="M0 4h3M5 4h12l6 6v10H5V4M25 20h3M5 0v2M5 22v2M23 0v2M23 22v2M25 4h3M0 20h3" {...line} /><path d="M16 3v8h8z" /></Icon>
        <Padlock solid />
      </IconStrip>
      <Spacer />
      <Label $dim htmlFor="fill">Fill:</Label>
      <PercentField id="fill" />
    </PropRow>
  </Column>
);

const LayerStack = () => (
  <Column $bg={c.well}>
    <LayerRow>
      <Visibility aria-label="Toggle visibility"><Icon w={25} h={16}><EyeShape /></Icon></Visibility>
      <LayerBody>
        <LayerThumb />
        <span>Background</span>
        <Padlock />
      </LayerBody>
    </LayerRow>
    <LayerFooter>
      <FootButton $dim aria-label="Link layers"><Icon w={30} h={16}><path d="M13 2H8a6 6 0 0 0 0 12h5M17 2h5a6 6 0 0 1 0 12h-5" {...line} strokeWidth={2.500} /><path d="M9 6h12v4H9z" /></Icon></FootButton>
      <FootButton $dim $caret aria-label="Layer style"><Glyph $size={26} $italic>fx</Glyph></FootButton>
      <FootButton aria-label="Add mask"><Icon w={26} h={20}><path d="M0 0h26v20H0z" /><circle cx="13" cy="10" r="6" fill="#515151" /></Icon></FootButton>
      <FootButton $caret aria-label="Adjustment layer"><HalfCircle /></FootButton>
      <FootButton aria-label="New group"><Icon w={24} h={20}><path d="M0 0h12v3H0zM0 4h24v16H0z" /></Icon></FootButton>
      <FootButton aria-label="New layer"><NewItem /></FootButton>
      <FootButton $dim aria-label="Delete layer"><Trash /></FootButton>
    </LayerFooter>
  </Column>
);

const PanelSection = styled.section`
  flex: none;
  display: flex;
`;

const LibrariesEdge = styled.div`
  flex: none;
  height: 2px;
  background: ${c.panel};
`;

export default function App() {
  return (
    <>
      <Global />
      <Desktop>
        <SystemBar />
        <Backdrop>
          <WindowFrame>
            <TitleBar>
              <Lights>
                <Light $color="#ff5f57" $dot aria-label="Close" />
                <Light $color="#febc2e" aria-label="Minimize" />
                <Light $color="#28c840" aria-label="Zoom" />
              </Lights>
              <Title>Adobe Photoshop 2021</Title>
            </TitleBar>
            <Options />
            <Workspace>
              <Toolbar />
              <SplitV />
              <DocumentArea />
              <SplitV />
              <Column $w={558}>
                <DockHeader $left={48}><Double left /><Double /></DockHeader>
                <Row>
                  <SideDock />
                  <SplitV />
                  <Column>
                    <TabBar tabs={['Histogram', 'Info']} />
                    <HistogramBody>
                      <HistogramBox>
                        <Icon w={24} h={24}><path d="M12 0l12 24H0z" /><path d="M11 8h2.500v8H11zM11 18h2.500v3H11z" fill="#333" /></Icon>
                      </HistogramBox>
                    </HistogramBody>
                    <SplitH />
                    <TabBar tabs={['Libraries', 'Adjustments']} />
                    <LibrariesEdge />
                    <SplitH />
                    <TabBar tabs={['Layers', 'Channels']} />
                    <PanelSection><LayerControls /></PanelSection>
                    <LayerStack />
                  </Column>
                </Row>
              </Column>
            </Workspace>
          </WindowFrame>
        </Backdrop>
      </Desktop>
    </>
  );
}
